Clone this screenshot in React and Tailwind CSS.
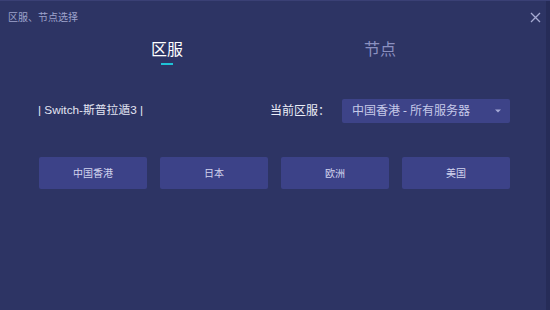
import { useState } from 'react'

const regions = ['中国香港', '日本', '欧洲', '美国']

export default function App() {
  const [tab, setTab] = useState('region')

  return (
    <div
      className="w-[550px] h-[310px] bg-[#2d3464] relative overflow-hidden border-t border-[#3a4075] text-white"
      style={{ fontFamily: '"Noto Sans", "Noto Sans CJK SC", sans-serif' }}
    >
      {/* Title bar */}
      <div className="flex items-center justify-between h-[32px] pl-[8px] pr-[8px]">
        <span className="text-[10px] text-[#9ea3cc] leading-none">区服、节点选择</span>
        <button className="w-[14px] h-[14px] flex items-center justify-center text-[#a6aad2]">
          <svg width="11" height="11" viewBox="0 0 11 11" fill="none" stroke="currentColor" strokeWidth="1.3">
            <path d="M1 1 L10 10 M10 1 L1 10" />
          </svg>
        </button>
      </div>

      {/* Tabs */}
      <div className="flex h-[36px]">
        <button onClick={() => setTab('region')} className="w-[334px] flex flex-col items-center pt-[6px]">
          <span className={'text-[16px] leading-[20px] ' + (tab === 'region' ? 'text-white' : 'text-[#8b90c0]')}>区服</span>
          <span className={'mt-[4px] w-[12px] h-[2px] ' + (tab === 'region' ? 'bg-[#1fc2d6]' : 'bg-transparent')} />
        </button>
        <button onClick={() => setTab('node')} className="w-[92px] flex flex-col items-center pt-[6px]">
          <span className={'text-[16px] leading-[20px] ' + (tab === 'node' ? 'text-white' : 'text-[#8b90c0]')}>节点</span>
          <span className={'mt-[4px] w-[12px] h-[2px] ' + (tab === 'node' ? 'bg-[#1fc2d6]' : 'bg-transparent')} />
        </button>
      </div>

      {/* Game + current region */}
      <div className="flex items-center mt-[30px] pl-[38px] pr-[40px]">
        <span
          className="text-[11.8px] text-[#e2e4f2] leading-none"
          style={{ fontFamily: '"Liberation Sans", "Noto Sans CJK SC", sans-serif' }}
        >
          | Switch-斯普拉遁3 |
        </span>
        <span className="ml-auto text-[12px] text-[#eceef8] leading-none mr-[12px]">当前区服：</span>
        <div className="w-[168px] h-[24px] bg-[#3d4388] rounded-[2px] flex items-center pl-[10px] pr-[9px]">
          <span className="text-[12px] text-[#c6c9e8] leading-none">中国香港 - 所有服务器</span>
          <svg className="ml-auto" width="6" height="4" viewBox="0 0 6 4">
            <path d="M0 0.5 L6 0.5 L3 3.5 Z" fill="#a6aad6" />
          </svg>
        </div>
      </div>

      {/* Region buttons */}
      <div className="flex gap-[13px] pl-[39px] mt-[34px]">
        {regions.map((r) => (
          <button
            key={r}
            className="w-[108px] h-[32px] bg-[#3c4288] rounded-[2px] flex items-center justify-center text-[10px] text-[#d2d4ee]"
          >
            {r}
          </button>
        ))}
      </div>

      <div className="absolute right-0 top-0 w-[4px] h-full bg-[#262c58]" />
    </div>
  )
}
